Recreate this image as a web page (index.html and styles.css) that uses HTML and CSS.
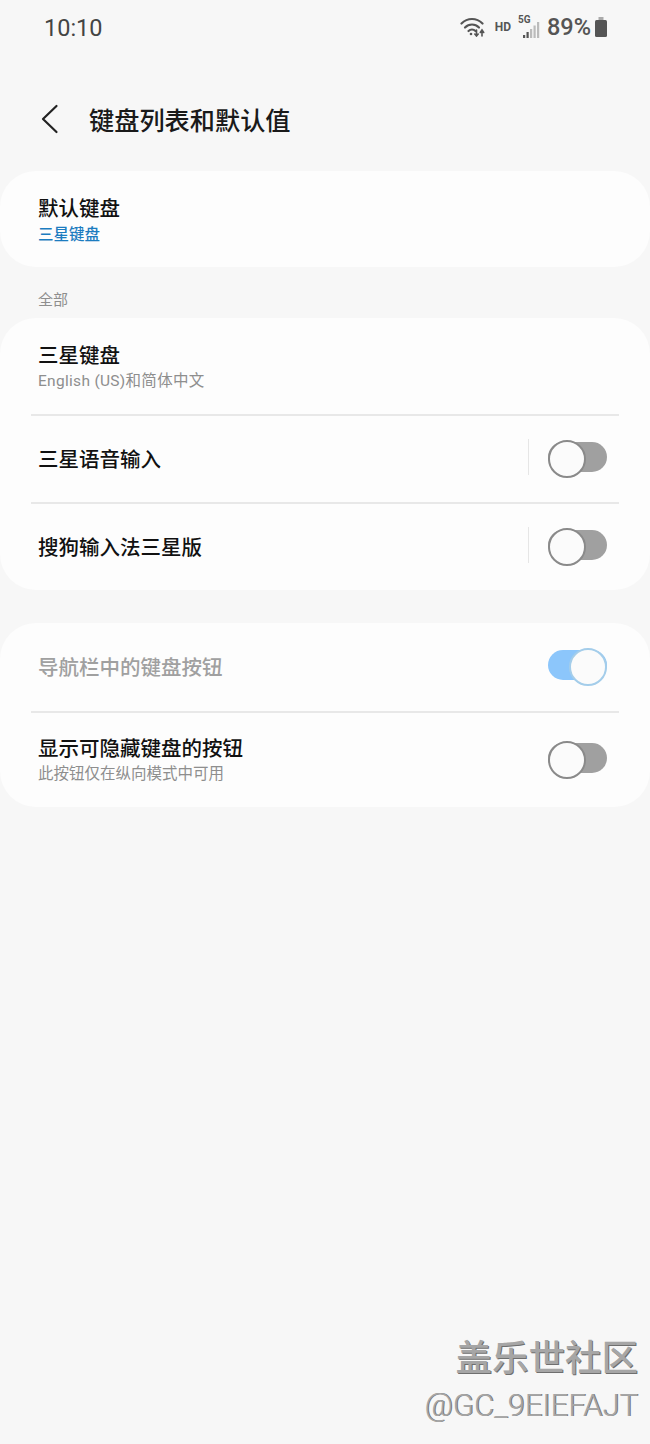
FILE: index.html
```html
<!DOCTYPE html>
<html lang="zh-CN">
<head>
  <meta charset="UTF-8" />
  <meta name="viewport" content="width=device-width, initial-scale=1.0"/>
  <title>键盘列表和默认值</title>
  <link rel="stylesheet" href="styles.css">
</head>
<body>

  <div class="status-bar">
    <span class="clock">10:10</span>
    <div class="status-icons">
      <svg class="wifi" width="26" height="20" viewBox="0 0 26 20" fill="none" stroke="#555" stroke-width="2.200" stroke-linecap="round">
        <path d="M1.500 6.500C7.500 0.500 16.500 0.500 22.500 6.500"/>
        <path d="M5 10.500C9 6.500 15 6.500 19 10.500"/>
        <path d="M8.500 14C10.500 12 13.500 12 15.500 14"/>
        <circle cx="11" cy="17" r="1.300" fill="#555" stroke="none"/>
        <path d="M16.500 13V18.500M14.800 17L16.500 19L18.200 17" stroke-width="1.600"/>
        <path d="M22 19V13.500M20.300 15.500L22 13L23.700 15.500" stroke-width="1.600"/>
      </svg>
      <span class="hd">HD</span>
      <div class="signal">
        <span class="five-g">5G</span>
        <svg width="17" height="16" viewBox="0 0 17 16">
          <rect x="0" y="13" width="2.200" height="3" fill="#555"/>
          <rect x="3.500" y="10" width="2.200" height="6" fill="#555"/>
          <rect x="7" y="7" width="2.200" height="9" fill="#bbb"/>
          <rect x="10.500" y="3.500" width="2.200" height="12.500" fill="#bbb"/>
          <rect x="14" y="0" width="2.200" height="16" fill="#bbb"/>
        </svg>
      </div>
      <span class="battery-pct">89%</span>
      <svg class="battery" width="14" height="20" viewBox="0 0 14 20">
        <path d="M4.500 0H9.500V3H4.500Z" fill="#aaa"/>
        <path d="M2.500 3H11.500Q13 3 13 4.500V18.500Q13 20 11.500 20H2.500Q1 20 1 18.500V4.500Q1 3 2.500 3Z" fill="#555"/>
      </svg>
    </div>
  </div>

  <div class="app-bar">
    <svg class="back" width="18" height="30" viewBox="0 0 18 30" fill="none" stroke="#222" stroke-width="2.200" stroke-linecap="round" stroke-linejoin="round">
      <path d="M15.500 2L2 15L15.500 28"/>
    </svg>
    <h1>键盘列表和默认值</h1>
  </div>

  <div class="card">
    <div class="row row-tall">
      <div class="row-text">
        <div class="row-title">默认键盘</div>
        <div class="row-sub row-sub-blue">三星键盘</div>
      </div>
    </div>
  </div>

  <div class="section-label">全部</div>

  <div class="card">
    <div class="row row-tall">
      <div class="row-text">
        <div class="row-title">三星键盘</div>
        <div class="row-sub row-sub-wide">English (US)和简体中文</div>
      </div>
    </div>
    <div class="row">
      <div class="row-text">
        <div class="row-title">三星语音输入</div>
      </div>
      <span class="v-line"></span>
      <span class="switch"></span>
    </div>
    <div class="row">
      <div class="row-text">
        <div class="row-title">搜狗输入法三星版</div>
      </div>
      <span class="v-line"></span>
      <span class="switch"></span>
    </div>
  </div>

  <div class="card card-gap">
    <div class="row">
      <div class="row-text">
        <div class="row-title row-title-off">导航栏中的键盘按钮</div>
      </div>
      <span class="switch switch-on"></span>
    </div>
    <div class="row row-tall">
      <div class="row-text">
        <div class="row-title">显示可隐藏键盘的按钮</div>
        <div class="row-sub">此按钮仅在纵向模式中可用</div>
      </div>
      <span class="switch"></span>
    </div>
  </div>

  <div class="watermark">
    <div class="wm-name">盖乐世社区</div>
    <div class="wm-user">@GC_9EIEFAJT</div>
  </div>

</body>
</html>
```

FILE: styles.css
```css
* {
  box-sizing: border-box;
  margin: 0;
  padding: 0;
}
html, body {
  width: 650px;
  height: 1444px;
  overflow: hidden;
}
body {
  position: relative;
  background: #f7f7f7;
  color: #111;
  font-family: Roboto, "Noto Sans CJK SC", sans-serif;
}

/* status bar */
.status-bar {
  height: 54px;
  padding: 14px 42px 0 44px;
  display: flex;
  justify-content: space-between;
  align-items: flex-start;
}
.clock {
  font-size: 23.500px;
  line-height: 28px;
  color: #444;
}
.status-icons {
  display: flex;
  align-items: center;
  height: 26px;
  color: #555;
}
.wifi {
  margin-right: 9px;
}
.hd {
  font-size: 12px;
  font-weight: 700;
  margin-right: 7px;
}
.signal {
  position: relative;
  width: 22px;
  height: 22px;
  margin-right: 7px;
  display: flex;
  justify-content: flex-end;
  align-items: flex-end;
}
.signal svg {
  display: block;
}
.five-g {
  position: absolute;
  top: -2px;
  left: 0;
  font-size: 10px;
  font-weight: 700;
}
.battery-pct {
  font-size: 23.500px;
  line-height: 26px;
  font-weight: 500;
  color: #555;
  margin-right: 3px;
}

/* title */
.app-bar {
  height: 117px;
  padding: 13px 0 0 41px;
  display: flex;
  align-items: center;
}
.back {
  margin-right: 30px;
}
h1 {
  font-size: 25.200px;
  font-weight: 500;
  color: #1a1a1a;
}

/* cards */
.card {
  background: #fdfdfd;
  border-radius: 36px;
}
.card-gap {
  margin-top: 33px;
}
.row {
  height: 88px;
  padding: 0 43px 0 38px;
  display: flex;
  align-items: center;
  position: relative;
}
.row-tall {
  height: 96px;
}
.row + .row::before {
  content: "";
  position: absolute;
  top: 0;
  left: 31px;
  right: 31px;
  height: 2px;
  background: #e8e8e8;
}
.row-text {
  flex: 1;
  padding-top: 4px;
}
.row-tall .row-text {
  padding-top: 2px;
}
.row-title {
  font-size: 20.500px;
  line-height: 26px;
  font-weight: 500;
  color: #111;
}
.row-title-off {
  margin-top: -2px;
  color: #a0a0a0;
}
.row-sub {
  font-size: 15.500px;
  line-height: 20px;
  margin-top: 2px;
  color: #8e8e8e;
}
.row-sub-blue {
  margin-top: 3px;
  color: #1c7cc0;
  font-weight: 500;
}
.row-sub-wide {
  letter-spacing: 0.300px;
}
.section-label {
  height: 51px;
  padding: 24px 0 0 38px;
  font-size: 15px;
  line-height: 18px;
  color: #8e8e8e;
}

/* switches */
.v-line {
  width: 1px;
  height: 36px;
  background: #e6e6e6;
  margin-right: 19px;
  margin-bottom: 2px;
}
.switch {
  position: relative;
  width: 59px;
  height: 30px;
  margin-bottom: 2px;
  border-radius: 15px;
  background: #a0a0a0;
}
.switch::after {
  content: "";
  position: absolute;
  top: -2px;
  left: 0;
  width: 34px;
  height: 34px;
  border-radius: 50%;
  background: #fbfbfb;
  border: 2px solid #8a8a8a;
}
.switch-on {
  margin-bottom: 4px;
  background: #8cc6fb;
}
.switch-on::after {
  left: auto;
  right: 0;
  border-color: #a4cdea;
}

/* screenshot watermark */
.watermark {
  position: absolute;
  right: 12px;
  top: 1337px;
  text-align: right;
  color: #a6a6a6;
  text-shadow: 1px 1px 0 #6f6f6f;
}
.wm-name {
  font-size: 36.500px;
  line-height: 44px;
  font-weight: 500;
}
.wm-user {
  font-size: 31px;
  line-height: 40px;
  margin-top: 5px;
  font-weight: 300;
  text-shadow: 1px 0 0 #777;
}
```
